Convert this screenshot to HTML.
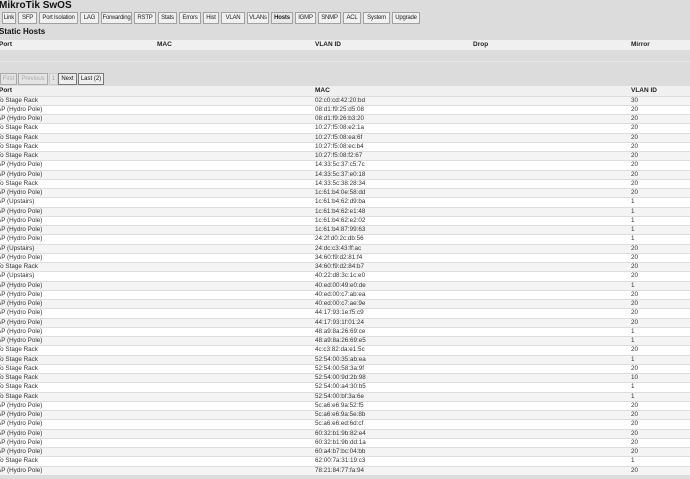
<!DOCTYPE html>
<html><head><style>
body{margin:0;width:690px;height:479px;overflow:hidden;background:#dcdcdc;font-family:"Liberation Sans",Arial,sans-serif;position:relative;color:#222}
.title{position:absolute;left:-1px;top:0px;font-size:10px;font-weight:bold;color:#111}
.tab{position:absolute;top:12px;height:10px;border:1px solid #a0a0a0;background:#f0f0f0;font-size:6px;line-height:10px;text-align:center;color:#222;box-sizing:content-box;white-space:nowrap;overflow:hidden;letter-spacing:-0.2px}
.tab.a{font-weight:bold;background:#e8e8e8}
.h2{position:absolute;left:-1px;top:27px;font-size:8px;font-weight:bold;color:#111}
.hdr{position:absolute;left:0;width:690px;height:10px;background:#f0f0f0;font-size:6.5px;font-weight:bold;line-height:10px}
.hdr span{position:absolute}
.btn{position:absolute;top:73px;height:10px;border:1px solid #aaa;font-size:6px;line-height:10px;text-align:center;background:#e4e4e4;color:#aaa;white-space:nowrap}
.btn.on{color:#111;border-color:#777;background:#eee}
#rows{position:absolute;left:0;top:96.5px;width:690px}
.r{height:8.25px;border-bottom:1px solid #ddd;position:relative;font-size:6.3px;line-height:8.25px;color:#333;background:#fff}
.r:nth-child(odd){background:#f4f4f4}
.r span{position:absolute;white-space:nowrap}
</style></head><body>
<div class="title">MikroTik SwOS</div>
<div class="tab" style="left:2px;width:12px">Link</div>
<div class="tab" style="left:18px;width:17px">SFP</div>
<div class="tab" style="left:39px;width:37px">Port Isolation</div>
<div class="tab" style="left:80px;width:17px">LAG</div>
<div class="tab" style="left:101px;width:29px">Forwarding</div>
<div class="tab" style="left:134px;width:20px">RSTP</div>
<div class="tab" style="left:158px;width:17px">Stats</div>
<div class="tab" style="left:179px;width:20px">Errors</div>
<div class="tab" style="left:203px;width:14px">Hist</div>
<div class="tab" style="left:221px;width:22px">VLAN</div>
<div class="tab" style="left:247px;width:20px">VLANs</div>
<div class="tab a" style="left:271px;width:20px">Hosts</div>
<div class="tab" style="left:295px;width:19px">IGMP</div>
<div class="tab" style="left:318px;width:21px">SNMP</div>
<div class="tab" style="left:343px;width:16px">ACL</div>
<div class="tab" style="left:363px;width:25px">System</div>
<div class="tab" style="left:392px;width:26px">Upgrade</div>
<div class="h2">Static Hosts</div>
<div class="hdr" style="top:40px"><span style="left:-1px">Port</span><span style="left:157px">MAC</span><span style="left:315px">VLAN ID</span><span style="left:473px">Drop</span><span style="left:631px">Mirror</span></div>
<div style="position:absolute;left:0;top:61px;width:690px;border-top:1px solid #e6e6e6"></div>
<div class="btn" style="left:0;width:15px">First</div>
<div class="btn" style="left:18px;width:28px">Previous</div>
<div class="btn" style="left:49px;width:7px;border-color:#ccc">1</div>
<div class="btn on" style="left:58px;width:17px">Next</div>
<div class="btn on" style="left:78px;width:24px">Last (2)</div>
<div class="hdr" style="top:86px"><span style="left:-1px">Port</span><span style="left:315px">MAC</span><span style="left:631px">VLAN ID</span></div>
<div id="rows"></div>
<script>
var d=[["To Stage Rack","02:c0:cd:42:20:bd",30],["AP (Hydro Pole)","08:d1:f9:25:d5:08",20],["AP (Hydro Pole)","08:d1:f9:26:b3:20",20],["To Stage Rack","10:27:f5:08:e2:1a",20],["To Stage Rack","10:27:f5:08:ea:6f",20],["To Stage Rack","10:27:f5:08:ec:b4",20],["To Stage Rack","10:27:f5:08:f2:67",20],["AP (Hydro Pole)","14:33:5c:37:c5:7c",20],["AP (Hydro Pole)","14:33:5c:37:e0:18",20],["To Stage Rack","14:33:5c:38:28:34",20],["AP (Hydro Pole)","1c:61:b4:0e:58:dd",20],["AP (Upstairs)","1c:61:b4:62:d9:ba",1],["AP (Hydro Pole)","1c:61:b4:62:e1:48",1],["AP (Hydro Pole)","1c:61:b4:62:e2:02",1],["AP (Hydro Pole)","1c:61:b4:87:99:63",1],["AP (Hydro Pole)","24:2f:d0:2c:db:56",1],["AP (Upstairs)","24:dc:c3:43:ff:ac",20],["AP (Hydro Pole)","34:60:f9:d2:81:f4",20],["To Stage Rack","34:60:f9:d2:84:b7",20],["AP (Upstairs)","40:22:d8:3c:1c:e0",20],["AP (Hydro Pole)","40:ed:00:49:e0:de",1],["AP (Hydro Pole)","40:ed:00:c7:ab:ea",20],["AP (Hydro Pole)","40:ed:00:c7:ae:9e",20],["AP (Hydro Pole)","44:17:93:1e:f5:c9",20],["AP (Hydro Pole)","44:17:93:1f:01:24",20],["AP (Hydro Pole)","48:a9:8a:26:69:ce",1],["AP (Hydro Pole)","48:a9:8a:26:69:e5",1],["To Stage Rack","4c:c3:82:da:e1:5c",20],["To Stage Rack","52:54:00:35:ab:ea",1],["To Stage Rack","52:54:00:58:3a:9f",20],["To Stage Rack","52:54:00:9d:2b:98",10],["To Stage Rack","52:54:00:a4:30:b5",1],["To Stage Rack","52:54:00:bf:3a:6e",1],["AP (Hydro Pole)","5c:a6:e6:9a:52:f5",20],["AP (Hydro Pole)","5c:a6:e6:9a:5e:8b",20],["AP (Hydro Pole)","5c:a6:e6:ed:6d:cf",20],["AP (Hydro Pole)","60:32:b1:9b:82:e4",20],["AP (Hydro Pole)","60:32:b1:9b:dd:1a",20],["AP (Hydro Pole)","60:a4:b7:bc:04:bb",20],["To Stage Rack","62:00:7a:31:19:c3",1],["AP (Hydro Pole)","78:21:84:77:fa:94",20]];
var h="";d.forEach(function(r){h+='<div class="r"><span style="left:-3px">'+r[0]+'</span><span style="left:315px">'+r[1]+'</span><span style="left:631px">'+r[2]+'</span></div>'});
document.getElementById("rows").innerHTML=h;
</script>
</body></html>
